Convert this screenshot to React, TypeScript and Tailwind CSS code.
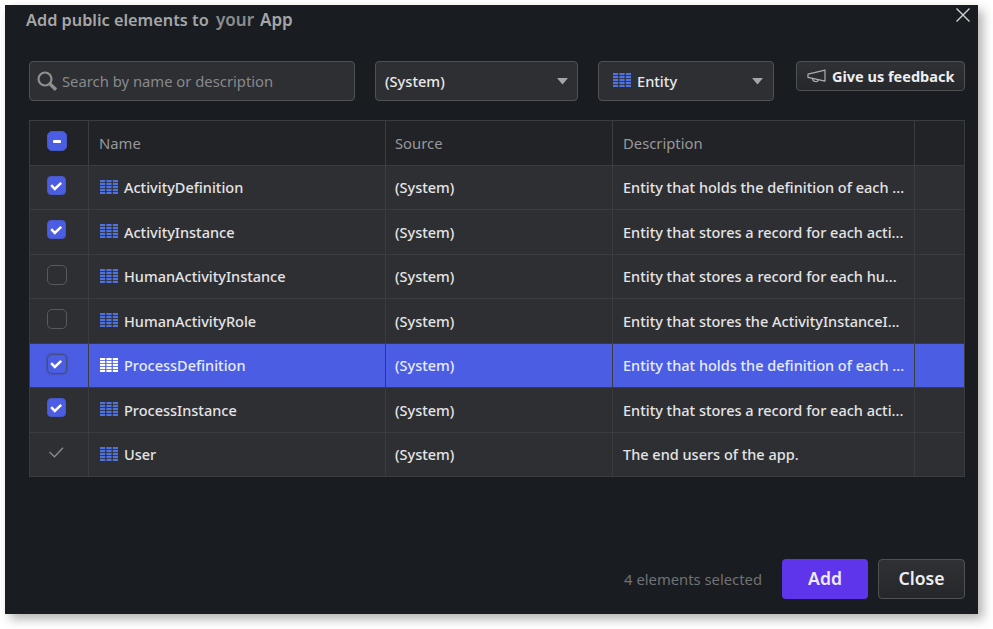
import React from 'react';

type State = 'on' | 'off' | 'fixed';
type Row = { name: string; description: string; state: State; height: string; selected?: boolean };

const rows: Row[] = [
  { name: 'ActivityDefinition', description: 'Entity that holds the definition of each ...', state: 'on', height: 'h-[44px]' },
  { name: 'ActivityInstance', description: 'Entity that stores a record for each acti...', state: 'on', height: 'h-[45px]' },
  { name: 'HumanActivityInstance', description: 'Entity that stores a record for each hu...', state: 'off', height: 'h-[44px]' },
  { name: 'HumanActivityRole', description: 'Entity that stores the ActivityInstanceI...', state: 'off', height: 'h-[45px]' },
  { name: 'ProcessDefinition', description: 'Entity that holds the definition of each ...', state: 'on', height: 'h-[44px]', selected: true },
  { name: 'ProcessInstance', description: 'Entity that stores a record for each acti...', state: 'on', height: 'h-[45px]' },
  { name: 'User', description: 'The end users of the app.', state: 'fixed', height: 'h-[44px]' },
];

const columns = 'grid grid-cols-[59px_297px_227px_302px_50px]';

function EntityIcon({ color = '#4f72e3' }: { color?: string }) {
  return (
    <svg width="18" height="14" viewBox="0 0 18 14" className="mb-[2px] block shrink-0" fill={color}>
      {[0, 3, 6, 9, 12].map((y) =>
        [0, 6.4, 12.8].map((x) => <rect key={`${x}-${y}`} x={x} y={y} width="5.2" height="2.2" />),
      )}
    </svg>
  );
}

function Caret() {
  return (
    <svg width="11" height="7" viewBox="0 0 11 7" className="block" fill="#a4a5a7">
      <path d="M0 0h11L5.5 6.5z" />
    </svg>
  );
}

function Checkbox({ state, selected }: { state: State; selected?: boolean }) {
  if (state === 'fixed') {
    return (
      <svg width="20" height="20" viewBox="0 0 20 20" className="block" fill="none" stroke="#8b8c8e" strokeWidth="1.3">
        <path d="M2.500 9l5 4.800L16 4.800" />
      </svg>
    );
  }
  if (state === 'off') {
    return <div className="h-5 w-5 rounded-[5px] border border-[#58595c]" />;
  }
  return (
    <div className={selected ? 'h-5 w-5 rounded-[5px] border-[1.5px] border-[#434e80] bg-[#4b5de3] shadow-[0_0_1px_1px_rgba(67,78,128,0.5)]' : 'h-[19px] w-[19px] rounded-[4px] border border-[#4657c6] bg-[#4b5de3]'}>
      <svg width="18" height="18" viewBox="0 0 18 18" className="block" fill="none" stroke="#fff" strokeWidth="2.500">
        <path d="M3.200 8.200l3.600 3.700 6.400-6" />
      </svg>
    </div>
  );
}

export default function App() {
  return (
    <div className="h-[629px] w-[993px] overflow-hidden bg-white pl-[5px] pt-[5px] font-['Noto_Sans',sans-serif]">
      <div className="flex h-[609px] w-[973px] flex-col bg-[#191c20] pl-6 pr-[13px] shadow-[5px_5px_10px_rgba(0,0,0,0.3)]">
        <div className="-ml-[3px] flex h-[56px] items-start justify-between">
          <h1 className="flex pt-[3px] text-[16.3px] font-semibold leading-6 text-[#a5a6a8]">
            <span className="w-[190px] whitespace-nowrap">Add public elements to</span>
            <span className="w-[44px] text-[17px] text-[#8c8d8f]">your</span>
            <span className="text-[17px]">App</span>
          </h1>
          <svg width="16" height="16" viewBox="0 0 16 16" className="-mr-[6px] mt-[2px]" fill="none" stroke="#d3d4d5" strokeWidth="1.4">
            <path d="M1.500 1.500l13 13M14.500 1.500l-13 13" />
          </svg>
        </div>

        <div className="flex h-[60px] items-start text-[14.6px]">
          <div className="flex h-10 w-[326px] items-center rounded border border-[#505154] bg-[#2e2f33] pl-[7px] text-[14.8px] text-[#88898c]">
            <svg width="21" height="21" viewBox="0 0 21 21" fill="none" stroke="#8e8f91">
              <circle cx="8" cy="8" r="6.500" strokeWidth="2.200" />
              <path d="M12.800 12.800l6.200 6" strokeWidth="3.400" />
            </svg>
            <span className="ml-[4px]">Search by name or description</span>
          </div>
          <div className="ml-5 flex h-10 w-[203px] items-center justify-between rounded border border-[#505154] bg-[#2e2f33] pl-[9px] pr-[9px] font-medium text-[#e9e9ea]">
            <span className="pt-[2px]">(System)</span>
            <Caret />
          </div>
          <div className="ml-5 flex h-10 w-[176px] items-center rounded border border-[#505154] bg-[#2e2f33] pl-[14px] pr-[10px] font-medium text-[#e9e9ea]">
            <EntityIcon />
            <span className="ml-[6px] flex-1 pt-[2px]">Entity</span>
            <Caret />
          </div>
          <div className="ml-[22px] flex h-[30px] w-[169px] items-center rounded border border-[#505154] bg-linear-to-b from-[#303135] to-[#25272a] pl-[10px] text-[14.500px] font-bold text-[#eeeeef]">
            <svg width="20" height="14" viewBox="0 0 20 14" fill="none" stroke="#aeafb1" strokeWidth="1.2" strokeLinejoin="round">
              <path d="M1 5.200L18 1.100v11L1 8.400zM5.500 9.500c.2 3.600 5.200 4 6 1.300" />
            </svg>
            <span className="ml-[5px] whitespace-nowrap pt-[2px]">Give us feedback</span>
          </div>
        </div>

        <div className="-mt-px w-[936px] border-l border-t border-[#3b3c40] text-[14.500px]">
          <div className={`${columns} h-[45px] bg-[#222326] text-[14.8px] text-[#97989b]`}>
            <div className="border-b border-r border-[#3b3c40] pl-[17px] pt-[10px]">
              <div className="flex h-5 w-5 items-center justify-center rounded-[5px] border border-[#4657c6] bg-[#4b5de3]">
                <div className="mr-px h-[3px] w-2 rounded-[1px] bg-white" />
              </div>
            </div>
            <div className="flex items-center border-b border-r border-[#3b3c40] pl-[10px]">Name</div>
            <div className="flex items-center border-b border-r border-[#3b3c40] pl-[9px]">Source</div>
            <div className="flex items-center border-b border-r border-[#3b3c40] pl-[10px]">Description</div>
            <div className="border-b border-r border-[#3b3c40]" />
          </div>
          {rows.map((row) => (
            <div key={row.name} className={`${columns} ${row.height} font-medium ${row.selected ? 'bg-[#4b5de3] text-[#e6ebff]' : 'bg-[#2e2f33] text-[#e4e4e5]'}`}>
              <div className="border-b border-r border-[#3b3c40] pl-[17px] pt-[10px]">
                <div className="h-5 w-5">
                  <Checkbox state={row.state} selected={row.selected} />
                </div>
              </div>
              <div className="flex items-center border-b border-r border-[#3b3c40] pl-[11px]">
                <EntityIcon color={row.selected ? '#ffffff' : '#4f72e3'} />
                <span className="ml-[6px] pt-px">{row.name}</span>
              </div>
              <div className="flex items-center border-b border-r border-[#3b3c40] pl-[9px] pt-px">(System)</div>
              <div className="flex items-center whitespace-nowrap border-b border-r border-[#3b3c40] pl-[10px] pt-px">{row.description}</div>
              <div className="border-b border-r border-[#3b3c40]" />
            </div>
          ))}
        </div>

        <div className="mt-auto flex items-center justify-end pb-[15px]">
          <span className="mr-5 text-[14.8px] text-[#717275]">4 elements selected</span>
          <button className="h-10 w-[86px] rounded bg-[#5e35ea] pb-[2px] text-[17.6px] font-semibold text-[#efeaff]">Add</button>
          <button className="ml-[10px] h-10 w-[87px] rounded border border-[#505154] bg-linear-to-b from-[#303135] to-[#25272a] pb-[2px] text-[17.6px] font-semibold text-[#eeeeef]">Close</button>
        </div>
      </div>
    </div>
  );
}
